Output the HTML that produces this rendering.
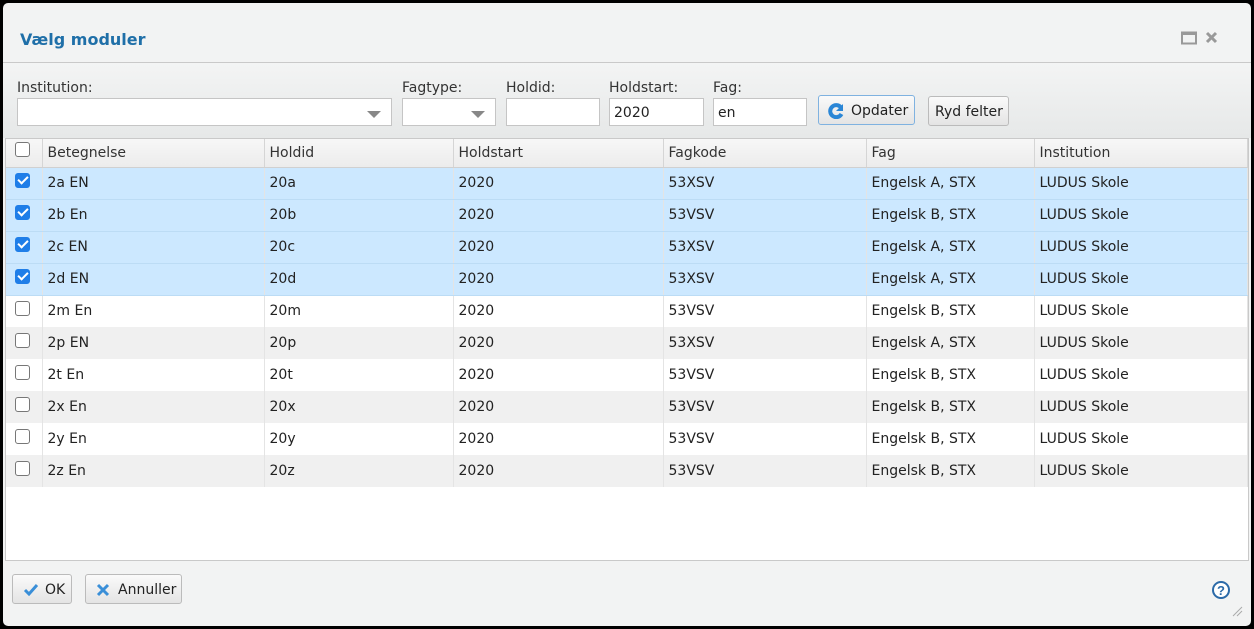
<!DOCTYPE html>
<html><head><meta charset="utf-8"><style>
*{box-sizing:border-box;margin:0;padding:0}
body{width:1254px;height:629px;background:#000;font-family:"DejaVu Sans","Liberation Sans",sans-serif;font-size:14px;color:#222;position:relative;overflow:hidden}
.dlg{position:absolute;left:3px;top:3px;width:1248px;height:623px;background:#f2f3f3;border-radius:5px;overflow:hidden}
.title{position:absolute;left:17px;top:27px;font-size:16px;font-weight:bold;color:#1f6fa8}
.tline{position:absolute;left:0;top:59px;width:100%;height:1px;background:#c9c9c9}
.tb{position:absolute;left:0;top:60px;width:100%;height:75px;background:linear-gradient(#f3f4f4,#e6e8e8)}
.lbl{position:absolute;top:77px;font-size:14px;color:#333}
.inp{position:absolute;top:95px;height:28px;background:#fff;border:1px solid #c5c5c5;font-size:14px;padding:6px 4px;color:#222}
.arr{position:absolute;right:10px;top:12px;width:0;height:0;border-left:7px solid transparent;border-right:7px solid transparent;border-top:7px solid #888}
.btn{position:absolute;height:30px;border:1px solid #bbb;border-radius:3px;background:linear-gradient(#fafafa,#e4e4e4);font-size:14px;padding:7px 6px;color:#222;white-space:nowrap}
.grid{position:absolute;left:2px;top:135px;width:1244px;height:423px;background:#fff;border:1px solid #c9c9c9}
table{border-collapse:collapse;width:100%;table-layout:fixed}
th{height:28px;background:linear-gradient(#f7f7f7,#ececec);font-weight:normal;text-align:left;padding-left:5px;border-right:1px solid #d5d5d5;border-bottom:1px solid #d0d0d0;font-size:14px;color:#333}
td{height:32px;padding-left:5px;border-right:1px solid #e4e4e4;font-size:14px}
tr.s td{background:#cce8ff;border-bottom:1px solid #bcdcf5}
tr.a td{background:#f0f0f0}
.cb{display:inline-block;width:15px;height:15px;border:1px solid #777;border-radius:3px;background:#fff;vertical-align:middle;position:relative;top:-3px}
.cb.on{background:#1f7ee8;border-color:#1f7ee8}
.cb.on:after{content:"";position:absolute;left:4px;top:0px;width:4px;height:8px;border:solid #fff;border-width:0 2.5px 2.5px 0;transform:rotate(45deg)}
</style></head><body>
<div class="dlg">
<div class="title">Vælg moduler</div>
<svg style="position:absolute;left:1178px;top:28px" width="40" height="14"><rect x="1" y="1.5" width="14" height="11" fill="none" stroke="#999" stroke-width="2"/><rect x="1" y="1" width="14" height="3" fill="#999"/><path d="M26 2l9 9M35 2l-9 9" stroke="#999" stroke-width="3"/></svg>
<div class="tline"></div>
<div class="tb"></div>
<div class="lbl" style="left:14px">Institution:</div>
<div class="lbl" style="left:399px">Fagtype:</div>
<div class="lbl" style="left:503px">Holdid:</div>
<div class="lbl" style="left:606px">Holdstart:</div>
<div class="lbl" style="left:710px">Fag:</div>
<div class="inp" style="left:14px;width:375px"><div class="arr"></div></div>
<div class="inp" style="left:399px;width:94px"><div class="arr"></div></div>
<div class="inp" style="left:503px;width:94px"></div>
<div class="inp" style="left:606px;width:95px">2020</div>
<div class="inp" style="left:710px;width:94px">en</div>
<div class="btn" style="left:815px;top:92px;width:97px;border-color:#7fb2e0;padding-left:32px">Opdater<svg style="position:absolute;left:9px;top:7px" width="16" height="16"><path d="M13 4.5A6 6 0 1 0 13.5 11" stroke="#2a86d6" stroke-width="4" fill="none"/><path d="M15 1v7h-7z" fill="#2a86d6"/></svg></div>
<div class="btn" style="left:925px;top:93px;width:81px">Ryd felter</div>
<div class="grid"><table>
<colgroup><col style="width:36px"><col style="width:222px"><col style="width:189px"><col style="width:210px"><col style="width:203px"><col style="width:168px"><col></colgroup>
<tr><th style="padding-left:9px"><span class="cb"></span></th><th>Betegnelse</th><th>Holdid</th><th>Holdstart</th><th>Fagkode</th><th>Fag</th><th>Institution</th></tr>
<tr class="s"><td style="padding-left:9px"><span class="cb on"></span></td><td>2a EN</td><td>20a</td><td>2020</td><td>53XSV</td><td>Engelsk A, STX</td><td>LUDUS Skole</td></tr>
<tr class="s"><td style="padding-left:9px"><span class="cb on"></span></td><td>2b En</td><td>20b</td><td>2020</td><td>53VSV</td><td>Engelsk B, STX</td><td>LUDUS Skole</td></tr>
<tr class="s"><td style="padding-left:9px"><span class="cb on"></span></td><td>2c EN</td><td>20c</td><td>2020</td><td>53XSV</td><td>Engelsk A, STX</td><td>LUDUS Skole</td></tr>
<tr class="s"><td style="padding-left:9px"><span class="cb on"></span></td><td>2d EN</td><td>20d</td><td>2020</td><td>53XSV</td><td>Engelsk A, STX</td><td>LUDUS Skole</td></tr>
<tr><td style="padding-left:9px"><span class="cb"></span></td><td>2m En</td><td>20m</td><td>2020</td><td>53VSV</td><td>Engelsk B, STX</td><td>LUDUS Skole</td></tr>
<tr class="a"><td style="padding-left:9px"><span class="cb"></span></td><td>2p EN</td><td>20p</td><td>2020</td><td>53XSV</td><td>Engelsk A, STX</td><td>LUDUS Skole</td></tr>
<tr><td style="padding-left:9px"><span class="cb"></span></td><td>2t En</td><td>20t</td><td>2020</td><td>53VSV</td><td>Engelsk B, STX</td><td>LUDUS Skole</td></tr>
<tr class="a"><td style="padding-left:9px"><span class="cb"></span></td><td>2x En</td><td>20x</td><td>2020</td><td>53VSV</td><td>Engelsk B, STX</td><td>LUDUS Skole</td></tr>
<tr><td style="padding-left:9px"><span class="cb"></span></td><td>2y En</td><td>20y</td><td>2020</td><td>53VSV</td><td>Engelsk B, STX</td><td>LUDUS Skole</td></tr>
<tr class="a"><td style="padding-left:9px"><span class="cb"></span></td><td>2z En</td><td>20z</td><td>2020</td><td>53VSV</td><td>Engelsk B, STX</td><td>LUDUS Skole</td></tr>
</table></div>
<div class="btn" style="left:9px;top:571px;width:60px;padding-left:32px">OK<svg style="position:absolute;left:10px;top:9px" width="16" height="12"><path d="M2 6l4 4 8-9" stroke="#3a8fd8" stroke-width="3" fill="none"/></svg></div>
<div class="btn" style="left:82px;top:571px;width:97px;padding-left:32px">Annuller<svg style="position:absolute;left:10px;top:8px" width="14" height="14"><path d="M2 2l10 10M12 2l-10 10" stroke="#3a8fd8" stroke-width="3"/></svg></div>
<svg style="position:absolute;left:1208px;top:577px" width="20" height="20"><circle cx="10" cy="10" r="8" fill="#fff" stroke="#2c6aa8" stroke-width="2"/><text x="10" y="15" font-size="13" font-weight="bold" text-anchor="middle" fill="#2c6aa8" font-family="Liberation Sans">?</text></svg>
<svg style="position:absolute;left:1228px;top:602px" width="12" height="12"><path d="M2 11L11 2M6 11L11 6" stroke="#aaa" stroke-width="1"/></svg>
</div>
</body></html>
